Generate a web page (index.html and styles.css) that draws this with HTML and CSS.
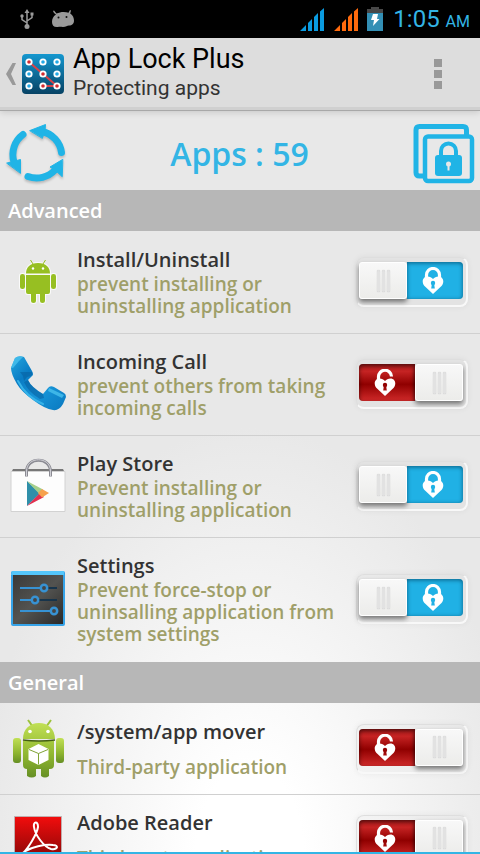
FILE: index.html
```
<!DOCTYPE html>
<html lang="en">
<head>
    <meta charset="UTF-8">
    <meta name="viewport" content="width=device-width, initial-scale=1.0">
    <title>App Lock Plus</title>
    <link rel="stylesheet" href="styles.css">
</head>
<body>
    <!-- shared shapes -->
    <svg class="defs" aria-hidden="true">
        <defs>
            <mask id="keyhole">
                <rect width="22" height="27" fill="#fff"/>
                <circle cx="11" cy="16" r="2.2"/>
                <path d="M10 16h2l.8 5.500H9.200z"/>
            </mask>
            <symbol id="lock-closed" viewBox="0 0 22 27">
                <path d="M4.500 12V8a6.500 6.500 0 0 1 13 0v4" fill="none" stroke="#fff" stroke-width="3.200"/>
                <path mask="url(#keyhole)" fill="#fff" d="M11 27 2.500 19C-1 15 1 9.500 5.500 9.500c2.500 0 4 1 5.500 2.500 1.500-1.500 3-2.500 5.500-2.500 4.500 0 6.500 5.500 3 9.500z"/>
            </symbol>
            <symbol id="lock-open" viewBox="0 0 22 27">
                <path d="M4.500 12V8a6.500 6.500 0 0 1 13-.500" fill="none" stroke="#fff" stroke-width="3.200"/>
                <path mask="url(#keyhole)" fill="#fff" d="M11 27 2.500 19C-1 15 1 9.500 5.500 9.500c2.500 0 4 1 5.500 2.500 1.500-1.500 3-2.500 5.500-2.500 4.500 0 6.500 5.500 3 9.500z"/>
            </symbol>
        </defs>
    </svg>

    <div class="status-bar">
        <svg class="usb" width="14" height="20" viewBox="0 0 14 20" fill="none" stroke="#9a9a9a" stroke-width="1.500">
            <path d="M7 17V2M7 14 2 10.500V7M7 12l5-3.500V5"/>
            <path fill="#9a9a9a" stroke="none" d="M7 0l2.500 4h-5zM10.500 3.500h3v3h-3z"/>
            <circle cx="2" cy="7" r="1.700" fill="#9a9a9a" stroke="none"/>
            <circle cx="7" cy="17.500" r="2.500" fill="#9a9a9a" stroke="none"/>
        </svg>
        <svg width="22" height="18" viewBox="0 0 22 18">
            <path fill="#9a9a9a" d="M2 3 1 1l1-.500 2.500 3c4-2 9-2 12-.700L18 0l1 .500-.800 3C21 5.500 22 8 22 10.500c0 3.500-2 5-5 5-2 0-3 1.500-6 1.500-2 0-3-.500-5 0-4 .500-6-1.500-6-5 0-3 1-5.500 4-7.500z"/>
            <circle cx="6.500" cy="7.500" r="1" fill="#111"/>
            <circle cx="14.500" cy="7" r="1" fill="#111"/>
        </svg>
        <span class="spacer"></span>
        <svg width="25" height="23" viewBox="0 0 25 23" fill="#0a9be0">
            <path d="M0 23l6-6v6zM8 15l4-4v12H8zM14 9l4-4v18h-4zM20 3.500l4-3.500v23h-4z"/>
        </svg>
        <svg class="signal" width="25" height="23" viewBox="0 0 25 23" fill="#ff6a0d">
            <path d="M0 23l6-6v6zM8 15l4-4v12H8zM14 9l4-4v18h-4zM20 3.500l4-3.500v23h-4z"/>
        </svg>
        <svg class="battery" width="16" height="24" viewBox="0 0 16 24">
            <path fill="#484848" d="M4 0h8v2h4v4H0V2h4z"/>
            <path fill="#338fb5" d="M0 6h16v18H0z"/>
            <path fill="#fff" d="M6 7h5l-1 5h2.500L6 19l1-6H4z"/>
        </svg>
        <span class="clock">1:05 <small>AM</small></span>
    </div>

    <header class="action-bar">
        <button class="up" aria-label="Back">
            <svg width="11" height="22" viewBox="0 0 11 22"><path d="M6.500 0H10L5 11l5 11H6.500L0 11z" fill="#999"/></svg>
            <svg width="42" height="40" viewBox="0 0 42 40">
                <defs>
                    <linearGradient id="app" x2="0" y2="1"><stop stop-color="#1497cf"/><stop offset="1" stop-color="#064264"/></linearGradient>
                </defs>
                <rect width="42" height="40" rx="4" fill="url(#app)"/>
                <path d="M7 8l28 24H21" fill="none" stroke="#d9434a" stroke-width="2"/>
                <g fill="#23a9e6" stroke="#fff" stroke-width="1.800">
                    <circle cx="21" cy="8" r="2.700"/><circle cx="35" cy="8" r="2.700"/>
                    <circle cx="7" cy="20" r="2.700"/><circle cx="35" cy="20" r="2.700"/><circle cx="7" cy="32" r="2.700"/>
                </g>
                <g fill="#d32b30" stroke="#fff" stroke-width="1.800">
                    <circle cx="7" cy="8" r="2.700"/><circle cx="21" cy="20" r="2.700"/>
                    <circle cx="21" cy="32" r="2.700"/><circle cx="35" cy="32" r="2.700"/>
                </g>
            </svg>
        </button>
        <div class="titles">
            <h1>App Lock Plus</h1>
            <p>Protecting apps</p>
        </div>
        <button class="overflow" aria-label="More options"><i></i><i></i><i></i></button>
    </header>

    <div class="summary">
        <button aria-label="Refresh">
            <svg class="refresh" width="60" height="60" viewBox="0 0 60 60" fill="none" stroke="#20b4e6" stroke-width="7" stroke-linecap="round">
                <path d="M55.500 28.500A25 25 0 0 0 36 7.500M17 10.500A25 25 0 0 0 8 38M22 52.500A25 25 0 0 0 49 46"/>
                <path fill="#20b4e6" stroke="#20b4e6" stroke-width="1" stroke-linejoin="round" d="M24 6.500 39.500.5l-.500 6L36.500 14zM1 39l6-1.500 7.500-2V49zM56.500 35.500 44 43l5 3 7 6.500z"/>
            </svg>
        </button>
        <span class="count">Apps : 59</span>
        <button aria-label="Lock all">
            <svg width="62" height="60" viewBox="0 0 62 60">
                <path d="M10 52H6.500q-3.500 0-3.500-3.500V6q0-3.500 3.500-3.500H50q3.500 0 3.500 3.500v5" fill="none" stroke="#20b4e6" stroke-width="5"/>
                <rect x="12" y="12.500" width="47" height="44.500" rx="3" fill="none" stroke="#20b4e6" stroke-width="4.500"/>
                <path d="M28 32v-5a7.500 7.500 0 0 1 15 0v5" fill="none" stroke="#20b4e6" stroke-width="4"/>
                <rect x="22" y="31" width="27" height="21" rx="3" fill="#20b4e6"/>
                <circle cx="35.500" cy="40" r="2.500" fill="#e8e8e8"/><path d="M34.500 40h2v6.500h-2z" fill="#e8e8e8"/>
            </svg>
        </button>
    </div>

    <main>
        <h2>Advanced</h2>
        <ul>
            <li>
                <svg class="icon" viewBox="0 0 56 56">
                    <g fill="#97bf22" stroke="#fafafa" stroke-width="2" paint-order="stroke">
                        <path d="M16 19.500c0-6 4-10.500 12-10.500s12 4.500 12 10.500zM16 21h24v17q0 2-2 2h-3v6.500q0 2.500-2.500 2.500T30 46.500V40h-4v6.500q0 2.500-2.500 2.500T21 46.500V40h-3q-2 0-2-2z"/>
                        <rect x="10" y="20" width="5" height="15" rx="2.300"/><rect x="41" y="20" width="5" height="15" rx="2.300"/>
                    </g>
                    <path d="M20.500 6l2.500 4M35.500 6l-2.500 4" stroke="#97bf22"/>
                    <circle cx="23" cy="14.500" r="1.200" fill="#fff"/><circle cx="33" cy="14.500" r="1.200" fill="#fff"/>
                </svg>
                <div class="text">
                    <h3 id="install">Install/Uninstall</h3>
                    <p>prevent installing or uninstalling application</p>
                </div>
                <label class="toggle">
                    <input type="checkbox" aria-labelledby="install" checked>
                    <span class="track"><svg class="closed"><use href="#lock-closed"/></svg><svg class="open"><use href="#lock-open"/></svg></span>
                    <span class="knob"><i></i><i></i><i></i></span>
                </label>
            </li>
            <li>
                <svg class="icon" viewBox="0 0 56 56">
                    <defs>
                        <linearGradient id="phone" x2="1" y2="1"><stop stop-color="#25a8e0"/><stop offset=".3" stop-color="#0a7cc4"/><stop offset=".6" stop-color="#1795d8"/><stop offset="1" stop-color="#0a78bf"/></linearGradient>
                    </defs>
                    <path fill="url(#phone)" d="M5 2q4-3 9-1l8 14q2 4 0 5l-4 4q3 7 15 14l5-6q2-3 6-1l10 6q2 1 2 4l-3 7q-4 7-10 6-8-1-20-10T7 28Q1 18 1 12z"/>
                    <path fill="#075e9f" opacity=".55" d="M22 16q2 4-5 5l-3 4-1-5-3-4zM18 24q3 7 15 14l1 4-4 1Q18 36 14 26z"/>
                    <path fill="#48c0ee" opacity=".8" d="M5 2q4-3 8-1L9 5 3 12l-2-.500zM39 32l15 7-2 3-14-7z"/>
                    <path fill="none" stroke="#37b3e8" stroke-width="2" stroke-linecap="round" d="M8 25q8 16 25 23"/>
                </svg>
                <div class="text">
                    <h3 id="call">Incoming Call</h3>
                    <p>prevent others from taking incoming calls</p>
                </div>
                <label class="toggle">
                    <input type="checkbox" aria-labelledby="call">
                    <span class="track"><svg class="closed"><use href="#lock-closed"/></svg><svg class="open"><use href="#lock-open"/></svg></span>
                    <span class="knob"><i></i><i></i><i></i></span>
                </label>
            </li>
            <li>
                <svg class="icon" viewBox="0 0 56 56">
                    <path fill="#777" d="M3 11h50l2 4H1z"/>
                    <path fill="#fdfdfd" stroke="#d2d2d2" d="M1 13.500h54v40H1z"/>
                    <path d="M16.500 18.500v-5c0-15 24-15 24 0v5" fill="none" stroke="#8b8b93" stroke-width="3"/>
                    <path d="M16.500 18v-5c0-15 24-15 24 0v5" fill="none" stroke="#d0d0d6"/>
                    <path fill="#2f8fa9" d="M17 23v25l13-12.500z"/>
                    <path fill="#a5cf8a" d="M17 23l16 8.500-4 4z"/>
                    <path fill="#e2304f" d="M17 48l13-13 4 4z"/>
                    <path fill="#f6a14d" d="M32 31l7 4-7 4.500-4-4.500z"/>
                </svg>
                <div class="text">
                    <h3 id="play">Play Store</h3>
                    <p>Prevent installing or uninstalling application</p>
                </div>
                <label class="toggle">
                    <input type="checkbox" aria-labelledby="play" checked>
                    <span class="track"><svg class="closed"><use href="#lock-closed"/></svg><svg class="open"><use href="#lock-open"/></svg></span>
                    <span class="knob"><i></i><i></i><i></i></span>
                </label>
            </li>
            <li>
                <svg class="icon" viewBox="0 0 56 56">
                    <defs>
                        <linearGradient id="panel" x2="1" y2="1"><stop stop-color="#3a3a39"/><stop offset=".5" stop-color="#535350"/><stop offset="1" stop-color="#292929"/></linearGradient>
                    </defs>
                    <rect x="1" y="0" width="54" height="55" rx="2" fill="#36a3e8"/>
                    <path fill="#54c6fb" d="M2 0h52v4H1z"/>
                    <path fill="url(#panel)" d="M3 4h50v49H3z"/>
                    <path d="M10 17h37M10 29h37M10 40h37" stroke="#17344b" stroke-width="2"/>
                    <path d="M10 17h22M10 29h13M10 40h33" stroke="#3792d3" stroke-width="2"/>
                    <g fill="#454545" stroke="#3792d3" stroke-width="2.500">
                        <circle cx="34" cy="17" r="3.200"/><circle cx="25" cy="29" r="3.200"/><circle cx="44" cy="40" r="3.200"/>
                    </g>
                </svg>
                <div class="text">
                    <h3 id="settings">Settings</h3>
                    <p>Prevent force-stop or uninsalling application from system settings</p>
                </div>
                <label class="toggle">
                    <input type="checkbox" aria-labelledby="settings" checked>
                    <span class="track"><svg class="closed"><use href="#lock-closed"/></svg><svg class="open"><use href="#lock-open"/></svg></span>
                    <span class="knob"><i></i><i></i><i></i></span>
                </label>
            </li>
        </ul>

        <h2>General</h2>
        <ul class="general">
            <li>
                <svg class="icon tall" viewBox="0 0 56 62">
                    <defs>
                        <linearGradient id="droid" x2="0" y2="1"><stop stop-color="#c1e055"/><stop offset=".6" stop-color="#8eb52f"/><stop offset="1" stop-color="#668f25"/></linearGradient>
                    </defs>
                    <path d="M18 2l5 7M41 2l-5 7" stroke="#9cc23b" stroke-width="2"/>
                    <g fill="url(#droid)">
                        <path d="M13 21c0-10 7-16 16-16s16 6 16 16zM13 23h31v24q0 4-4 4h-1v7q-4 3-8 0v-7h-5v7q-4 3-9 0v-7q-4 0-4-4z"/>
                        <rect x="3" y="20" width="8" height="25" rx="3"/><rect x="46" y="20" width="8" height="25" rx="3"/>
                    </g>
                    <path d="M13 22q16 2 32 0" fill="none" stroke="#435e14" stroke-width="1.500"/>
                    <circle cx="20" cy="13.500" r="1.800" fill="#fff"/><circle cx="38" cy="13.500" r="1.800" fill="#fff"/>
                    <path fill="#fff" d="M28.500 26l10 5v11l-10 5-10-5V31z"/>
                    <path d="M19 31.500l9.500 4 9.500-4M28.500 35.500v11" fill="none" stroke="#7fa336"/>
                </svg>
                <div class="text">
                    <h3 id="mover">/system/app mover</h3>
                    <p>Third-party application</p>
                </div>
                <label class="toggle">
                    <input type="checkbox" aria-labelledby="mover">
                    <span class="track"><svg class="closed"><use href="#lock-closed"/></svg><svg class="open"><use href="#lock-open"/></svg></span>
                    <span class="knob"><i></i><i></i><i></i></span>
                </label>
            </li>
            <li>
                <svg class="icon" viewBox="0 0 56 56">
                    <defs>
                        <linearGradient id="reader" x2="0" y2="1"><stop stop-color="#f30d0d"/><stop offset="1" stop-color="#7a0606"/></linearGradient>
                    </defs>
                    <rect x="4.500" y="4.500" width="47" height="48" fill="url(#reader)" stroke="#b9b9b9" stroke-width=".8"/>
                    <path d="M12 42c6-5 15-20 16-27 0-6-5-6-4 0 1 8 10 20 17 22 7 1 8-4 2-4-8-1-22 2-29 7-4 3-5 6-2 2z" fill="none" stroke="#fff" stroke-width="2"/>
                </svg>
                <div class="text">
                    <h3 id="adobe">Adobe Reader</h3>
                    <p>Third-party application</p>
                </div>
                <label class="toggle">
                    <input type="checkbox" aria-labelledby="adobe">
                    <span class="track"><svg class="closed"><use href="#lock-closed"/></svg><svg class="open"><use href="#lock-open"/></svg></span>
                    <span class="knob"><i></i><i></i><i></i></span>
                </label>
            </li>
        </ul>
    </main>
</body>
</html>
```
FILE: styles.css
```
* {
    box-sizing: border-box;
}
body {
    margin: 0;
    height: 100vh;
    display: flex;
    flex-direction: column;
    overflow: hidden;
    font-family: "Open Sans", "Noto Sans", sans-serif;
    background: radial-gradient(ellipse 56% 50% at 52% 100%, #ffffff 20%, #e8e8e8 100%);
}
h1, h2, h3, p, ul {
    margin: 0;
    padding: 0;
}
button {
    display: flex;
    padding: 0;
    border: none;
    background: none;
    cursor: pointer;
}
.defs {
    position: absolute;
    width: 0;
    height: 0;
}

/* status bar */
.status-bar {
    flex: none;
    display: flex;
    align-items: center;
    height: 38px;
    padding: 0 10px 0 20px;
    background: #000;
    font-family: Roboto, sans-serif;
}
.usb {
    margin-right: 18px;
}
.spacer {
    flex: 1;
}
.signal {
    margin: 0 8px 0 9px;
}
.battery {
    margin-right: 10px;
}
.clock {
    color: #33b5e5;
    font-size: 24px;
    font-weight: 400;
}
.clock small {
    font-size: 16px;
}

/* action bar */
.action-bar {
    flex: none;
    display: flex;
    align-items: center;
    height: 73px;
    padding: 0 38px 0 6px;
    background: #ddd;
    border-bottom: 1px solid #a8a8a8;
    box-shadow: inset 0 -3px #d0d0d0, 0 2px 6px rgba(0, 0, 0, 0.12);
    font-family: Roboto, sans-serif;
}
.up {
    align-items: center;
    gap: 5px;
}
.titles {
    flex: 1;
    margin-left: 9px;
    padding-bottom: 4px;
}
.titles h1 {
    font-size: 27px;
    font-weight: 400;
    line-height: 32px;
    color: #000;
}
.titles p {
    font-size: 21px;
    line-height: 26px;
    color: #333;
}
.overflow {
    flex-direction: column;
    gap: 3px;
}
.overflow i {
    width: 8px;
    height: 8px;
    background: #999;
}

/* refresh / count / lock all */
.summary {
    flex: none;
    display: flex;
    align-items: center;
    justify-content: space-between;
    height: 79px;
    padding: 6px 5px 0 6px;
}
.refresh {
    filter: drop-shadow(0 2px 1px rgba(0, 0, 0, 0.2));
}
.count {
    font-size: 32px;
    font-weight: 600;
    color: #33b5e5;
}

/* app list */
main {
    flex: 1;
    min-height: 0;
    overflow: hidden;
    border-bottom: 2px solid #33b5e5;
}
h2 {
    padding: 0 8px;
    background: #b7b7b7;
    color: #fff;
    font-size: 20px;
    font-weight: 600;
    line-height: 41px;
}
ul {
    padding-bottom: 1px;
    list-style: none;
}
li {
    display: flex;
    align-items: center;
    padding: 15px 8px 16px 10px;
    border-top: 1px solid #d0d0d0;
}
li:first-child {
    border-top-color: transparent;
}
.icon {
    flex: none;
    width: 56px;
    height: 56px;
}
.icon.tall {
    height: 62px;
    margin: -2px 0;
}
.text {
    flex: 1;
    margin: 0 11px;
}
h3 {
    font-size: 20px;
    font-weight: 600;
    line-height: 26px;
    color: #333;
}
.text p {
    font-size: 19px;
    font-weight: 600;
    line-height: 22px;
    color: #9f9f69;
}
.general p {
    margin-top: 11px;
}

/* sliding switch */
.toggle {
    flex: none;
    display: flex;
    width: 112px;
    height: 50px;
    margin-right: 4px;
    padding: 4px 3px 6px 2px;
    border: 1px solid #dedede;
    border-right: 2px solid #f8f8f8;
    border-bottom: 2px solid #f8f8f8;
    border-radius: 8px;
    background: rgba(0, 0, 0, 0.02);
    box-shadow: 0 0 6px rgba(0, 0, 0, 0.06);
    cursor: pointer;
}
.toggle input {
    position: absolute;
    opacity: 0;
}
.track {
    flex: 1;
    display: flex;
    align-items: center;
    justify-content: center;
    padding-right: 4px;
    border-radius: 4px 0 0 4px;
    background: linear-gradient(#b81c1c, #c52323 20%, #900000 55%, #d02a2a);
    box-shadow: inset 0 2px 4px rgba(0, 0, 0, 0.6);
}
.track svg {
    width: 22px;
    height: 27px;
}
.knob {
    display: flex;
    align-items: center;
    justify-content: center;
    gap: 2px;
    width: 48px;
    border: 1px solid #fff;
    border-radius: 3px;
    background: linear-gradient(#f8f8f8, #ececea);
    box-shadow: 0 3px 5px rgba(0, 0, 0, 0.5);
}
.knob i {
    width: 3px;
    height: 22px;
    border-radius: 2px;
    background: #e2e2e2;
    box-shadow: 0 0 1px #bbb;
}
.closed,
input:checked + .track .open {
    display: none;
}
input:checked + .track .closed {
    display: block;
}
input:checked + .track {
    order: 2;
    border-radius: 0 4px 4px 0;
    background: #20b1e5;
    box-shadow: inset 0 1px 4px rgba(0, 60, 90, 0.7);
}
```
